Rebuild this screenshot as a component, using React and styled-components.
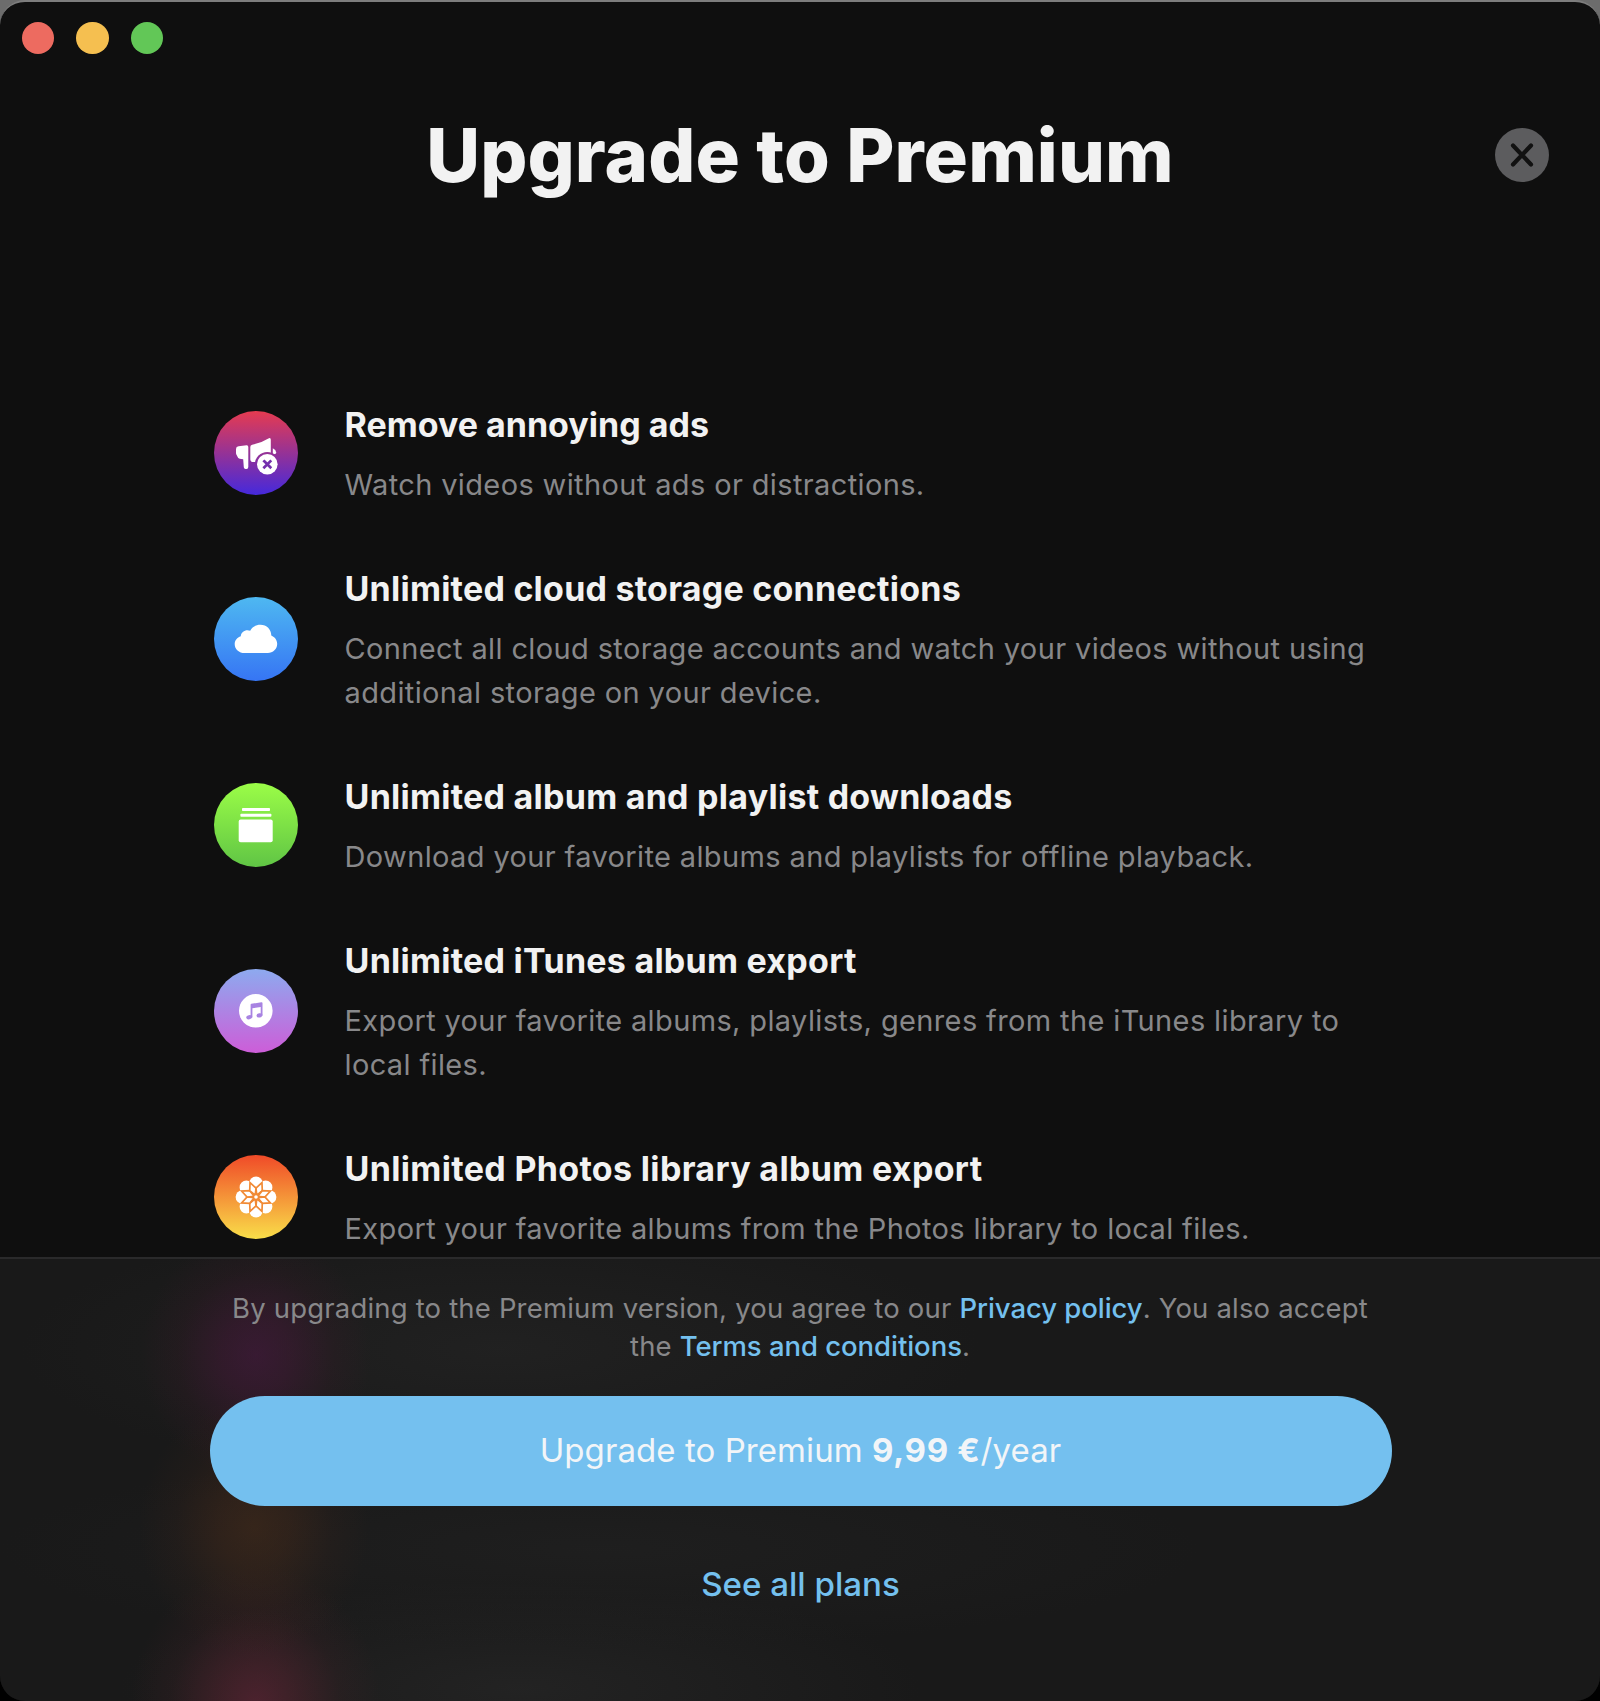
import React from "react";
import styled, { createGlobalStyle } from "styled-components";

const GlobalStyle = createGlobalStyle`
  *, *::before, *::after { box-sizing: border-box; }
  body {
    margin: 0;
    background: linear-gradient(#6c6c6c 0 60px, #000 60px);
    font-family: Inter, "Liberation Sans", sans-serif;
    -webkit-font-smoothing: antialiased;
  }
`;

const Window = styled.main`
  display: flex;
  flex-direction: column;
  width: 1600px;
  height: 1701px;
  overflow: hidden;
  border-radius: 25px;
  border-top: 2px solid #7d7d7d;
  background: #0f0f0f;
`;

const TitleBar = styled.div`
  display: flex;
  flex: none;
  align-items: center;
  gap: 22px;
  height: 72px;
  padding-left: 21.5px;
`;

const Light = styled.span`
  width: 32.6px;
  height: 32.6px;
  border-radius: 50%;
  background: ${(p) => p.$color};
`;

const Header = styled.header`
  display: grid;
  flex: none;
  grid-template-columns: 54px 1fr 54px;
  align-items: center;
  padding: 36px 51px 0;
`;

const Title = styled.h1`
  grid-column: 2;
  margin: 0;
  color: #f2f2f2;
  font-size: 74px;
  font-weight: 800;
  line-height: 90px;
  letter-spacing: 0.1px;
  text-align: center;
`;

const CloseButton = styled.button`
  display: block;
  width: 54px;
  height: 54px;
  padding: 0;
  border: 0;
  border-radius: 50%;
  background: #5c5c5e;

  svg { display: block; }
`;

const FeatureList = styled.ul`
  display: flex;
  flex: 1;
  flex-direction: column;
  gap: 56px;
  min-height: 0;
  margin: 199px 0 0;
  padding: 0 200px 0 214px;
  overflow: hidden;
  list-style: none;
`;

const Feature = styled.li`
  display: flex;
  flex: none;
  align-items: center;
  gap: 46.5px;
`;

const Badge = styled.span`
  flex: none;
  width: 84px;
  height: 84px;
  border-radius: 50%;
  background: linear-gradient(${(p) => p.$from}, ${(p) => p.$to});

  svg { display: block; }
`;

const FeatureTitle = styled.h2`
  margin: 0 0 15px;
  padding-top: 2px;
  color: #f2f2f2;
  font-size: 34px;
  font-weight: 700;
  line-height: 47px;
  letter-spacing: ${(p) => p.$tracking}px;
`;

const FeatureText = styled.p`
  margin: 0;
  color: #88888a;
  font-size: 29px;
  line-height: 44px;
  letter-spacing: 0.37px;
`;

const Footer = styled.footer`
  display: flex;
  flex: none;
  flex-direction: column;
  align-items: center;
  height: 444px;
  padding-top: 30px;
  border-top: 2px solid #2a2a2b;
  background:
    radial-gradient(ellipse 115px 125px at 256px 96px, rgba(78, 24, 68, 0.55), rgba(78, 24, 62, 0.42) 30%, rgba(78, 24, 50, 0.14) 68%, transparent),
    radial-gradient(ellipse 115px 130px at 254px 268px, rgba(82, 48, 26, 0.48), rgba(82, 46, 26, 0.36) 30%, rgba(80, 42, 28, 0.12) 68%, transparent),
    radial-gradient(ellipse 125px 140px at 256px 446px, rgba(108, 38, 58, 0.6), rgba(104, 38, 54, 0.42) 30%, rgba(90, 36, 46, 0.14) 68%, transparent),
    radial-gradient(ellipse 480px 130px at 500px 90px, rgba(36, 36, 36, 0.7), transparent),
    radial-gradient(ellipse 600px 100px at 600px 290px, rgba(34, 34, 34, 0.6), transparent),
    radial-gradient(ellipse 400px 110px at 520px 430px, rgba(38, 38, 38, 0.75), transparent),
    #191919;
`;

const Legal = styled.p`
  width: 1180px;
  margin: 0 0 31px;
  color: #88888a;
  font-size: 27.5px;
  line-height: 38px;
  letter-spacing: 0.18px;
  text-align: center;
`;

const LegalLink = styled.a`
  color: #74c0ee;
  font-weight: 500;
  letter-spacing: -0.05px;
`;

const UpgradeButton = styled.button`
  flex: none;
  width: 1182px;
  height: 110px;
  margin-left: 1px;
  padding: 0 0 2px;
  border: 0;
  border-radius: 55px;
  background: #74c0ef;
  color: #f2f5f8;
  font: 400 33px Inter, "Liberation Sans", sans-serif;
  letter-spacing: 0.07px;
`;

const Price = styled.strong`
  font-weight: 700;
  letter-spacing: 0.7px;
`;

const PlansLink = styled.a`
  margin-top: 58px;
  padding-left: 1px;
  color: #74c0ee;
  font-size: 33.1px;
  font-weight: 500;
  line-height: 40px;
`;

const AdsIcon = () => (
  <svg width="84" height="84" viewBox="214 411 84 84" fill="#fff">
    <defs>
      <mask id="badge-gap" maskUnits="userSpaceOnUse" x="214" y="411" width="84" height="84">
        <rect x="214" y="411" width="84" height="84" fill="#fff" />
        <circle cx="267.3" cy="464.3" r="12.4" fill="#000" />
      </mask>
    </defs>
    <path d="M238.6 446.2 L246.6 445.3 Q248.3 445.2 248.3 447 V467 Q248.3 469 246.5 469 H245.6 Q244 469 243.8 467.2 L243.2 459.2 Q238.8 458.8 238.2 458 L236.6 455 Q236 454 236 453 V449 Q236 446.5 238.6 446.2 Z" />
    <g mask="url(#badge-gap)">
      <path d="M250.3 447 Q250.3 445.1 252.2 444.7 Q261.5 442.7 268.4 438.4 Q270.8 437.2 270.8 439.8 V462 H252 Q250.3 461.5 250.3 459.6 Z" />
      <path d="M272.8 448.2 Q276 449.6 276.2 452.4 Q276 454.6 272.8 454.2 Z" />
    </g>
    <circle cx="267.3" cy="464.3" r="10.3" />
    <path d="M264.3 461.3 l6 6 m0 -6 l-6 6" stroke="#7430ad" strokeWidth="2.7" strokeLinecap="square" />
  </svg>
);

const CloudIcon = () => (
  <svg width="84" height="84" viewBox="0 0 84 84" fill="#fff">
    <path d="M30.6 56 C25 56 20.7 52.3 20.7 47.2 C20.7 43.2 23.2 40.3 26.8 39.2 C27 34.8 32 31.9 36.2 33.8 C38.2 30 42 27.7 46.4 27.7 C52.8 27.7 57.2 32.4 57.3 38.5 C60.8 40 63.2 43.2 63.2 46.8 C63.2 52 59 56 53.8 56 Z" />
  </svg>
);

const StackIcon = () => (
  <svg width="84" height="84" viewBox="0 0 84 84" fill="#fff">
    <rect x="28" y="25" width="28" height="3" rx="0.8" />
    <rect x="26.4" y="30.8" width="31" height="3" rx="0.8" />
    <rect x="24.7" y="36.4" width="34" height="22.8" rx="2" />
  </svg>
);

const MusicIcon = () => (
  <svg width="84" height="84" viewBox="0 0 84 84">
    <circle cx="41.8" cy="41.8" r="16.8" fill="#fff" />
    <g fill="#a883e2">
      <path d="M36.6 35.8 Q36.6 35 37.4 34.8 L47.4 33.2 Q48.5 33.1 48.5 34 V46.4 H46.7 V38 L38.4 39.3 V48.4 H36.6 Z" />
      <ellipse cx="35.2" cy="48.2" rx="3" ry="2.1" transform="rotate(-12 35.2 48.2)" />
      <ellipse cx="45.5" cy="46.4" rx="3" ry="2.1" transform="rotate(-12 45.5 46.4)" />
    </g>
  </svg>
);

const STEPS = [0, 45, 90, 135, 180, 225, 270, 315];

const FlowerIcon = () => (
  <svg width="84" height="84" viewBox="-42 -42 84 84">
    {STEPS.map((a) => (
      <circle key={a} cx="0" cy="-13.6" r="6.8" fill="#fff" transform={`rotate(${a})`} />
    ))}
    {STEPS.map((a) => (
      <path
        key={a}
        d="M0 -2 L3.4 -8.2 L0 -15.6 L-3.4 -8.2 Z"
        fill="#fff"
        stroke="#f18a35"
        strokeWidth="1.7"
        transform={`rotate(${a + 22.5})`}
      />
    ))}
    <circle r="2.6" fill="#fff" stroke="#f18a35" strokeWidth="1.6" />
  </svg>
);

const FEATURES = [
  {
    title: "Remove annoying ads",
    text: "Watch videos without ads or distractions.",
    from: "#e63b50", to: "#4529dc", tracking: 0, Icon: AdsIcon,
  },
  {
    title: "Unlimited cloud storage connections",
    text: "Connect all cloud storage accounts and watch your videos without using additional storage on your device.",
    from: "#4eb8f1", to: "#3675f4", tracking: 0.23, Icon: CloudIcon,
  },
  {
    title: "Unlimited album and playlist downloads",
    text: "Download your favorite albums and playlists for offline playback.",
    from: "#9bfd47", to: "#60c545", tracking: 0.25, Icon: StackIcon,
  },
  {
    title: "Unlimited iTunes album export",
    text: "Export your favorite albums, playlists, genres from the iTunes library to local files.",
    from: "#8daaef", to: "#cd5dd8", tracking: 0.25, Icon: MusicIcon,
  },
  {
    title: "Unlimited Photos library album export",
    text: "Export your favorite albums from the Photos library to local files.",
    from: "#f04a28", to: "#f9de49", tracking: 0.33, Icon: FlowerIcon,
  },
];

export default function App() {
  return (
    <>
      <GlobalStyle />
      <Window>
        <TitleBar>
          <Light $color="#ed6b60" />
          <Light $color="#f5bf50" />
          <Light $color="#62c757" />
        </TitleBar>
        <Header>
          <Title>Upgrade to Premium</Title>
          <CloseButton aria-label="Close">
            <svg width="54" height="54" viewBox="0 0 54 54">
              <path d="M18 17.5 L36 36.5 M36 17.5 L18 36.5" stroke="#111" strokeWidth="4.2" strokeLinecap="round" />
            </svg>
          </CloseButton>
        </Header>
        <FeatureList>
          {FEATURES.map(({ title, text, from, to, tracking, Icon }) => (
            <Feature key={title}>
              <Badge $from={from} $to={to}>
                <Icon />
              </Badge>
              <div>
                <FeatureTitle $tracking={tracking}>{title}</FeatureTitle>
                <FeatureText>{text}</FeatureText>
              </div>
            </Feature>
          ))}
        </FeatureList>
        <Footer>
          <Legal>
            By upgrading to the Premium version, you agree to our <LegalLink>Privacy policy</LegalLink>. You also accept
            the <LegalLink>Terms and conditions</LegalLink>.
          </Legal>
          <UpgradeButton>
            Upgrade to Premium <Price>9,99 €</Price>/year
          </UpgradeButton>
          <PlansLink>See all plans</PlansLink>
        </Footer>
      </Window>
    </>
  );
}
